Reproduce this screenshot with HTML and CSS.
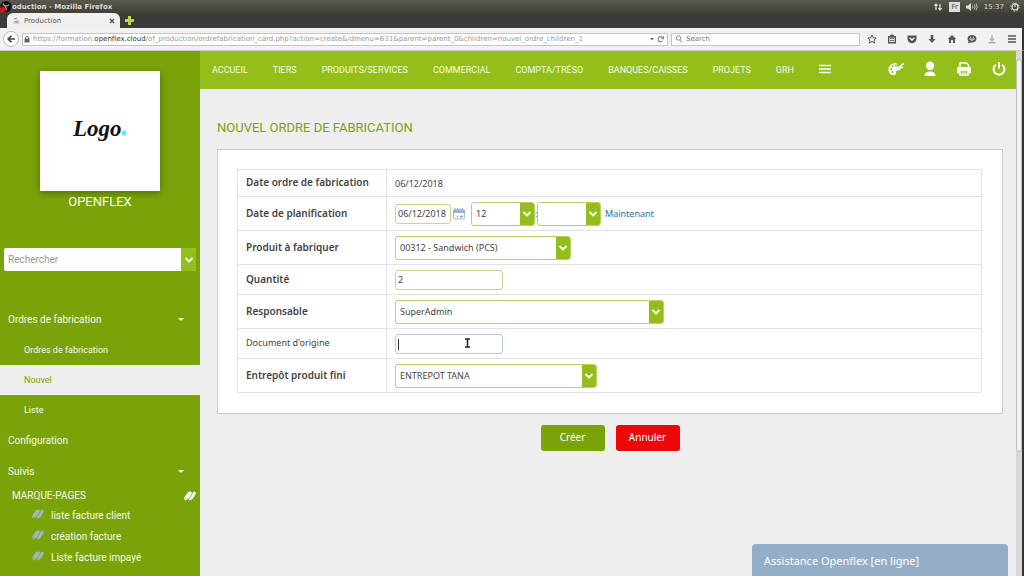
FILE: index.html
```html
<!DOCTYPE html>
<html lang="fr">
<head>
<meta charset="utf-8">
<title>Production</title>
<link rel="stylesheet" href="styles.css">
</head>
<body>
<svg class="defs" aria-hidden="true">
  <symbol id="chevron" viewBox="0 0 10 8"><path d="M1.500 2 5 5.500 8.500 2" fill="none" stroke="#fff" stroke-width="1.800"/></symbol>
  <symbol id="books" viewBox="0 0 12 10"><path d="M0 7 4 1 7 0.500 8 2 4.500 8 1 9.500Z"/><path d="M5 8.500 8.800 2 9 1 11 0.500 12 2.500 8.500 8 6 9.500Z"/><path d="M1 8 3.500 7.200" stroke="#7aa30a" stroke-width=".6" fill="none"/></symbol>
</svg>
<div class="window">
  <header class="titlebar">
    <svg class="badge" viewBox="0 0 13 13"><circle cx="6.500" cy="6" r="6" fill="#111"/><path d="M6 6 3 3M6 6 10 4M6 6 7 10" stroke="#aaa" stroke-width="1.300"/><circle cx="3" cy="9.500" r="3" fill="#e5121b"/></svg>
    <span class="window-title">oduction - Mozilla Firefox</span>
    <div class="tray">
      <svg width="10" height="10" viewBox="0 0 10 10"><path d="M3 8V2M7 2v6" stroke="#ddd" stroke-width="1.300"/><path d="M.8 4 3 1l2.200 3ZM4.800 6 7 9l2.200-3Z" fill="#ddd"/></svg>
      <span class="lang">Fr</span>
      <svg width="12" height="10" viewBox="0 0 12 10"><path d="M0 3.500h2L5 1v8L2 6.500H0Z" fill="#ddd"/><path d="M6.500 3.500q1 1.500 0 3M8.200 2.500q1.800 2.500 0 5M10 1.500q2.500 3.500 0 7" fill="none" stroke="#bbb"/></svg>
      <span>15:37</span>
      <svg width="10" height="10" viewBox="0 0 10 10"><circle cx="5" cy="5" r="3" fill="none" stroke="#ddd" stroke-width="1.200"/><circle cx="5" cy="5" r="4.200" fill="none" stroke="#ddd" stroke-dasharray="1.500 1.800"/><path d="M5 1v4" stroke="#ddd" stroke-width="1.200"/></svg>
    </div>
  </header>
  <div class="tabs">
    <div class="tab">
      <svg width="9" height="8" viewBox="0 0 9 8"><path d="M1 7Q0 4 3 4 4 1 7 3 9 5 7 7Z" fill="#cfd3d6"/><path d="M3 5h3M2 2l3-1" stroke="#888"/></svg>
      <span>Production</span>
      <button class="plain" aria-label="Fermer l'onglet"><svg width="6" height="6" viewBox="0 0 6 6"><path d="m1 1 4 4M5 1 1 5" stroke="#555" stroke-width="1.400"/></svg></button>
    </div>
    <button class="plain new-tab" aria-label="Nouvel onglet"><svg width="9" height="9" viewBox="0 0 9 9"><path d="M4.500 0v9M0 4.500h9" stroke="#b5d957" stroke-width="3"/></svg></button>
  </div>
  <div class="toolbar">
    <button class="back" aria-label="Retour"><svg width="8" height="8" viewBox="0 0 8 8"><path d="M4.500.8 1.200 4l3.300 3.200M1.500 4H8" fill="none" stroke="#444" stroke-width="1.700"/></svg></button>
    <div class="address">
      <svg width="6" height="8" viewBox="0 0 6 8"><path d="M.5 3.500h5V7.500h-5Z" fill="#666"/><path d="M1.500 4V2.200q1.500-2.400 3 0V4" fill="none" stroke="#666"/></svg>
      <span class="url">https://formation.<b>openflex.cloud</b>/of_production/ordrefabrication_card.php?action=create&amp;idmenu=631&amp;parent=parent_0&amp;children=nouvel_ordre_children_1</span>
      <svg width="16" height="8" viewBox="0 0 16 8"><path d="M1 3h4L3 5.500Z" fill="#666"/><path d="M13.500 5.800A2.500 2.500 0 1 1 13.500 2.500" fill="none" stroke="#888" stroke-width="1.200"/><path d="M15 .8v3.400h-3.400Z" fill="#888"/></svg>
    </div>
    <div class="finder">
      <svg width="8" height="8" viewBox="0 0 8 8"><circle cx="3.500" cy="3" r="2.200" fill="none" stroke="#888"/><path d="M5 5 7 7.500" stroke="#888"/></svg>
      <input type="text" placeholder="Search" aria-label="Search">
    </div>
    <div class="tools">
      <svg viewBox="0 0 10 10"><path d="m5 1 1.200 2.700 2.900.3L7 6l.6 3L5 7.500 2.400 9 3 6 .9 4l2.900-.3Z" fill="none" stroke="#555"/></svg>
      <svg viewBox="0 0 10 10"><path d="M1.700 2.700h6.600v6H1.700Z" fill="none" stroke="#555" stroke-width="1.400"/><path d="M3.500 1h3v2h-3ZM3 4.500h4M3 6.500h4" stroke="#555" fill="#555" stroke-width=".8"/></svg>
      <svg viewBox="0 0 10 10"><path d="M.5 1.500h9V5a4.500 4.200 0 0 1-9 0Z" fill="#555"/><path d="m2.800 4 2.200 2 2.200-2" fill="none" stroke="#fff" stroke-width="1.300"/></svg>
      <svg viewBox="0 0 10 10"><path d="M3.700 1h2.600v4h2.200L5 9 1.500 5h2.200Z" fill="#555"/></svg>
      <svg viewBox="0 0 10 10"><path d="M5 1 .8 5H2v4h2V6h2v3h2V5h1.200Z" fill="#555"/></svg>
      <svg viewBox="0 0 10 10"><ellipse cx="5" cy="4.800" rx="4.500" ry="3.800" fill="#555"/><path d="M1 9.500 2 6l3 2Z" fill="#555"/><path d="M2.500 5h5q-2.500 3-5 0M3 3.300h1.200M5.800 3.300H7" fill="none" stroke="#eee" stroke-width=".8"/></svg>
      <svg viewBox="0 0 10 10"><path d="M5 1v5M3 4.500l2 2 2-2M1.500 8.500h7" fill="none" stroke="#aaa" stroke-width="1.300"/></svg>
      <svg viewBox="0 0 10 10"><path d="M1 2h8M1 5h8M1 8h8" stroke="#555" stroke-width="1.600"/></svg>
    </div>
  </div>
  <div class="page">
    <aside class="sidebar">
      <div class="logo">
        <svg width="60" height="66" viewBox="0 0 60 66" role="img" aria-label="Logo"><text class="logo-text" x="3" y="38">Logo</text><circle cx="54" cy="35" r="2.500" fill="#66e8ec"/></svg>
      </div>
      <p class="company">OPENFLEX</p>
      <form class="search">
        <input type="text" placeholder="Rechercher" aria-label="Rechercher">
        <button type="button" aria-label="Ouvrir la recherche"><svg width="10" height="8"><use href="#chevron"/></svg></button>
      </form>
      <nav class="menu">
        <a class="top" href="#">Ordres de fabrication<i class="caret"></i></a>
        <a class="sub" href="#">Ordres de fabrication</a>
        <a class="sub current" href="#">Nouvel</a>
        <a class="sub" href="#">Liste</a>
        <a class="top" href="#">Configuration</a>
        <a class="top" href="#">Suivis<i class="caret"></i></a>
      </nav>
      <section class="bookmarks">
        <h2>MARQUE-PAGES<svg class="book" width="12" height="10"><use href="#books"/></svg></h2>
        <a href="#"><svg class="book muted" width="12" height="10"><use href="#books"/></svg>liste facture client</a>
        <a href="#"><svg class="book muted" width="12" height="10"><use href="#books"/></svg>création facture</a>
        <a href="#"><svg class="book muted" width="12" height="10"><use href="#books"/></svg>Liste facture impayé</a>
      </section>
    </aside>
    <div class="content">
      <header class="topnav">
        <nav>
          <a href="#">ACCUEIL</a><a href="#">TIERS</a><a href="#">PRODUITS/SERVICES</a><a href="#">COMMERCIAL</a><a href="#">COMPTA/TRÉSO</a><a href="#">BANQUES/CAISSES</a><a href="#">PROJETS</a><a href="#">GRH</a>
          <button class="plain more" aria-label="Plus"><svg width="12" height="10" viewBox="0 0 12 10"><path d="M0 1.500h12M0 5h12M0 8.500h12" stroke="#fff" stroke-width="1.300"/></svg></button>
        </nav>
        <div class="actions">
          <button class="plain" aria-label="Thème"><svg width="16" height="16" viewBox="0 0 16 16"><path d="M9 2.500C5 1.500.5 4 .5 8.500c0 4 3 6 6 5.500 2.500-.5.500-2.500 2-4 1.500-1 3 0 4-2L9 7Z" fill="#fff"/><path d="M7 9.500 15.500 2.500M9 6l3 1 3-1" stroke="#fff" stroke-width="1.500" fill="none"/><g fill="#94bf1b"><circle cx="3.200" cy="8" r="1.100"/><circle cx="4.700" cy="5" r="1.100"/><circle cx="7.800" cy="4.500" r="1.100"/><circle cx="4.500" cy="11" r="1.100"/></g></svg></button>
          <button class="plain" aria-label="Utilisateur"><svg width="12" height="16" viewBox="0 0 12 16"><circle cx="6" cy="4.800" r="4.200" fill="#fff"/><path d="M.5 15q0-4.500 5.500-4.500t5.500 4.500Z" fill="#fff"/></svg></button>
          <button class="plain" aria-label="Imprimer"><svg width="16" height="16" viewBox="0 0 16 16"><path d="M4 6V2h6.500L12.500 4v2" fill="none" stroke="#fff" stroke-width="1.500"/><rect x="1" y="6" width="14" height="6.500" rx="1.200" fill="#fff"/><path d="M4 9h8v5H4Z" fill="#94bf1b" stroke="#fff" stroke-width="1.400"/><path d="M5.500 11h5M5.500 12.500h5" stroke="#fff" stroke-width=".7"/></svg></button>
          <button class="plain" aria-label="Déconnexion"><svg width="14" height="16" viewBox="0 0 14 16"><path d="M3.800 3.800a5.500 5.500 0 1 0 6.400 0M7 1v6.500" fill="none" stroke="#fff" stroke-width="2"/></svg></button>
        </div>
      </header>
      <main>
        <h1>NOUVEL ORDRE DE FABRICATION</h1>
        <form>
          <div class="panel">
            <table>
              <tr class="short"><th>Date ordre de fabrication</th><td>06/12/2018</td></tr>
              <tr class="tall"><th><label for="date">Date de planification</label></th><td>
                <div class="row">
                  <input class="text date" id="date" type="text" value="06/12/2018">
                  <button class="plain calendar" type="button" aria-label="Calendrier"><svg width="12" height="13" viewBox="0 0 12 13"><rect x=".5" y="2.500" width="11" height="9.500" rx="1" fill="#f5f8fc" stroke="#a9bdd6"/><path d="M0 4.500h12" stroke="#8fa9cc" stroke-width="2.600"/><path d="M2 1v2M4.500 1v2M7 1v2M9.500 1v2" stroke="#9db3d0"/><path d="M4 9.500h1M7 9.500h3" stroke="#7f9fc8" stroke-width="1.500"/></svg></button>
                  <span class="select hour"><select aria-label="Heure"><option>12</option></select><i><svg width="10" height="8"><use href="#chevron"/></svg></i></span>
                  <span class="colon">:</span>
                  <span class="select hour"><select aria-label="Minute"><option></option></select><i><svg width="10" height="8"><use href="#chevron"/></svg></i></span>
                  <a class="now" href="#">Maintenant</a>
                </div></td></tr>
              <tr class="tall"><th><label for="product">Produit à fabriquer</label></th><td><span class="select product"><select id="product"><option>00312 - Sandwich (PCS)</option></select><i><svg width="10" height="8"><use href="#chevron"/></svg></i></span></td></tr>
              <tr class="medium"><th><label for="qty">Quantité</label></th><td><input class="text" id="qty" type="text" value="2"></td></tr>
              <tr class="tall"><th><label for="owner">Responsable</label></th><td><span class="select owner"><select id="owner"><option>SuperAdmin</option></select><i><svg width="10" height="8"><use href="#chevron"/></svg></i></span></td></tr>
              <tr class="medium"><th class="optional"><label for="origin">Document d'origine</label></th><td>
                <div class="focus-field"><input class="text focused" id="origin" type="text"><i class="insertion"></i>
                <svg class="pointer" width="7" height="10" viewBox="0 0 7 10"><path d="M1 1h5M1 9h5M3.500 1v8" stroke="#222" stroke-width="1.500"/></svg></div></td></tr>
              <tr class="tall"><th><label for="store">Entrepôt produit fini</label></th><td><span class="select store"><select id="store"><option>ENTREPOT TANA</option></select><i><svg width="10" height="8"><use href="#chevron"/></svg></i></span></td></tr>
            </table>
          </div>
          <div class="buttons"><button class="create" type="button">Créer</button><button class="cancel" type="button">Annuler</button></div>
        </form>
      </main>
      <button class="chat">Assistance Openflex [en ligne]</button>
    </div>
    <div class="scroll"><span class="thumb"></span></div>
  </div>
</div>
</body>
</html>
```
FILE: styles.css
```css
* { box-sizing: border-box; }
body { margin: 0; background: #3c3b37; font-family: Roboto, sans-serif; color: #444; }
a { color: inherit; text-decoration: none; }
button, input, select { font: inherit; color: inherit; }
svg { display: block; flex: none; }
.defs { position: absolute; width: 0; height: 0; }
.plain { display: block; padding: 0; border: 0; background: none; }
.window { display: flex; flex-direction: column; height: 100vh; overflow: hidden; }

.titlebar, .tabs, .toolbar { flex: none; font-family: "DejaVu Sans", sans-serif; font-size: 7px; }
.titlebar { display: flex; align-items: center; height: 13px; padding-right: 4px; background: linear-gradient(#5a594f, #403f3a); color: #dfdbd2; }
.badge { width: 12px; height: 12px; }
.window-title { font-weight: 700; }
.tray { display: flex; align-items: center; gap: 6px; margin-left: auto; }
.lang { padding: 0 2px; background: #ddd; color: #444; line-height: 10px; }
.tabs { display: flex; align-items: center; height: 15px; padding-left: 7px; background: #3c3b37; }
.tab { display: flex; align-items: center; gap: 3px; width: 113px; height: 15px; padding: 0 5px; border-radius: 6px 6px 0 0; background: #f2f0ef; color: #555; }
.tab button { margin-left: auto; }
.new-tab { margin-left: 5px; }
.toolbar { display: flex; align-items: center; gap: 3px; height: 23px; padding: 0 5px 0 3px; border-right: 2px solid #333; border-bottom: 1px solid #d0ccd0; background: #f3f0f0; }
.back { display: grid; place-items: center; width: 16px; height: 16px; padding: 0; border: 1px solid #bbb; border-radius: 50%; background: #fff; }
.address, .finder { display: flex; align-items: center; gap: 3px; height: 13px; border: 1px solid #c8c5c5; background: #fff; color: #999; }
.address { flex: 1; min-width: 0; padding: 0 2px 0 1px; }
.url { flex: 1; min-width: 0; overflow: hidden; white-space: nowrap; }
.url b { color: #333; font-weight: 400; }
.finder { width: 189px; padding-left: 3px; }
.finder input { flex: 1; min-width: 0; padding: 0; border: 0; outline: 0; background: none; }
.tools { display: flex; gap: 10px; padding-left: 4px; }
.tools svg { width: 10px; height: 10px; }

.page { display: flex; flex: 1; min-height: 0; }
.sidebar { flex: none; width: 200px; background: #7aa30a; color: #f6faea; overflow: hidden; }
.logo { display: grid; place-items: center; width: 120px; height: 120px; margin: 20px auto 0; background: #fff; box-shadow: 0 2px 7px rgba(0, 0, 0, .35); }
.logo-text { font: italic bold 23px "Liberation Serif", serif; fill: #111; }
.company { margin: 3px 0 0; font-size: 13px; line-height: 16px; text-align: center; }
.search { display: flex; height: 23px; margin: 38px 4px 0; border-radius: 3px; background: #fff; overflow: hidden; }
.search input { flex: 1; min-width: 0; padding: 0 4px; border: 0; outline: 0; font-size: 10px; }
.search input::placeholder { color: #999; }
.search button { display: grid; place-items: center; width: 15px; padding: 0; border: 0; background: #94bf1b; }
.menu { margin-top: 33px; }
.menu a { display: flex; align-items: center; justify-content: space-between; }
.top { height: 31px; padding: 0 16px 0 8px; font-size: 10px; }
.sub { height: 30px; padding-left: 24px; font-size: 9px; }
.current { background: #eee; color: #7aa30a; }
.caret { border: 3px solid transparent; border-top-color: #fff; border-bottom: 0; }
.bookmarks { font-size: 10px; }
.bookmarks h2 { display: flex; align-items: center; justify-content: space-between; margin: 0; padding: 0 4px 0 12px; font-size: 10px; font-weight: 400; line-height: 18px; }
.bookmarks a { display: flex; align-items: center; gap: 7px; padding-left: 32px; line-height: 21px; }
.book { fill: #fff; }
.muted { fill: #9fb8b8; margin-bottom: 4px; }

.content { position: relative; flex: 1; min-width: 0; background: #eee; }
.topnav { display: flex; align-items: center; justify-content: space-between; height: 38px; padding: 0 10px 0 12px; background: #94bf1b; color: #f6faea; font-size: 9px; }
.topnav nav { display: flex; align-items: center; gap: 25px; }
.more, .actions { padding-bottom: 3px; }
.actions { display: flex; align-items: center; gap: 20px; }
main { padding: 0 13px 0 17px; }
h1 { margin: 30px 0 12px; color: #7aa30a; font-size: 13px; font-weight: 400; line-height: 18px; }
.panel { padding: 19px 20px 20px 19px; border: 1px solid #ccc; background: #fff; }
table { width: 100%; border-collapse: collapse; border: 1px solid #ddd; font-family: "Noto Sans", sans-serif; font-size: 9px; }
th, td { padding: 0 8px; border: 1px solid #e2e2e2; text-align: left; }
th { width: 149px; padding-bottom: 2px; font-size: 10px; font-weight: 600; }
.optional { font-size: 9px; font-weight: 400; }
.short { height: 27px; }
.medium { height: 30px; }
.tall { height: 34px; }
.row { display: flex; align-items: center; }
.text { display: block; width: 108px; height: 20px; padding: 0 2px; border: 1px solid #c3d98a; border-radius: 3px; outline: 0; background: #fff; }
.date { width: 56px; }
.calendar { margin: 0 6px 0 2px; }
.select { display: grid; height: 24px; border: 1px solid #b5d16a; border-radius: 3px; background: #fff; overflow: hidden; }
.select select, .select i { grid-area: 1 / 1; }
.select select { appearance: none; min-width: 0; width: 100%; padding: 0 16px 0 4px; border: 0; outline: 0; background: none; }
.select i { display: grid; place-items: center; justify-self: end; width: 14px; background: #94bf1b; pointer-events: none; }
.hour { width: 64px; }
.product { width: 176px; }
.owner { width: 269px; }
.store { width: 202px; }
.colon { width: 2px; }
.now { margin-left: 4px; color: #2673ab; }
.focused { border-color: #b5cde4; }
.focus-field { position: relative; width: 108px; }
.insertion { position: absolute; top: 5px; left: 3px; width: 1px; height: 11px; background: #333; }
.pointer { position: absolute; top: 4px; left: 69px; }
.buttons { display: flex; justify-content: center; gap: 11px; margin-top: 11px; }
.buttons button { width: 64px; height: 26px; padding: 0 0 2px; border: 0; border-radius: 3px; color: #fff; font-family: "Noto Sans", sans-serif; font-size: 10px; }
.buttons .create { background: #7aa30a; }
.buttons .cancel { background: #ee0707; }
.chat { position: absolute; right: 8px; bottom: 0; width: 256px; height: 32px; padding: 0 12px; border: 0; border-radius: 4px 4px 0 0; background: #95aec7; color: #fff; font-family: "Noto Sans", sans-serif; font-size: 11px; text-align: left; }
.scroll { flex: none; width: 8px; padding-top: 8px; border-right: 2px solid #333; background: #d9d9d9; }
.thumb { display: block; height: 76%; border: 1px solid #bbb; border-radius: 3px; background: #f5f5f5; }
```
